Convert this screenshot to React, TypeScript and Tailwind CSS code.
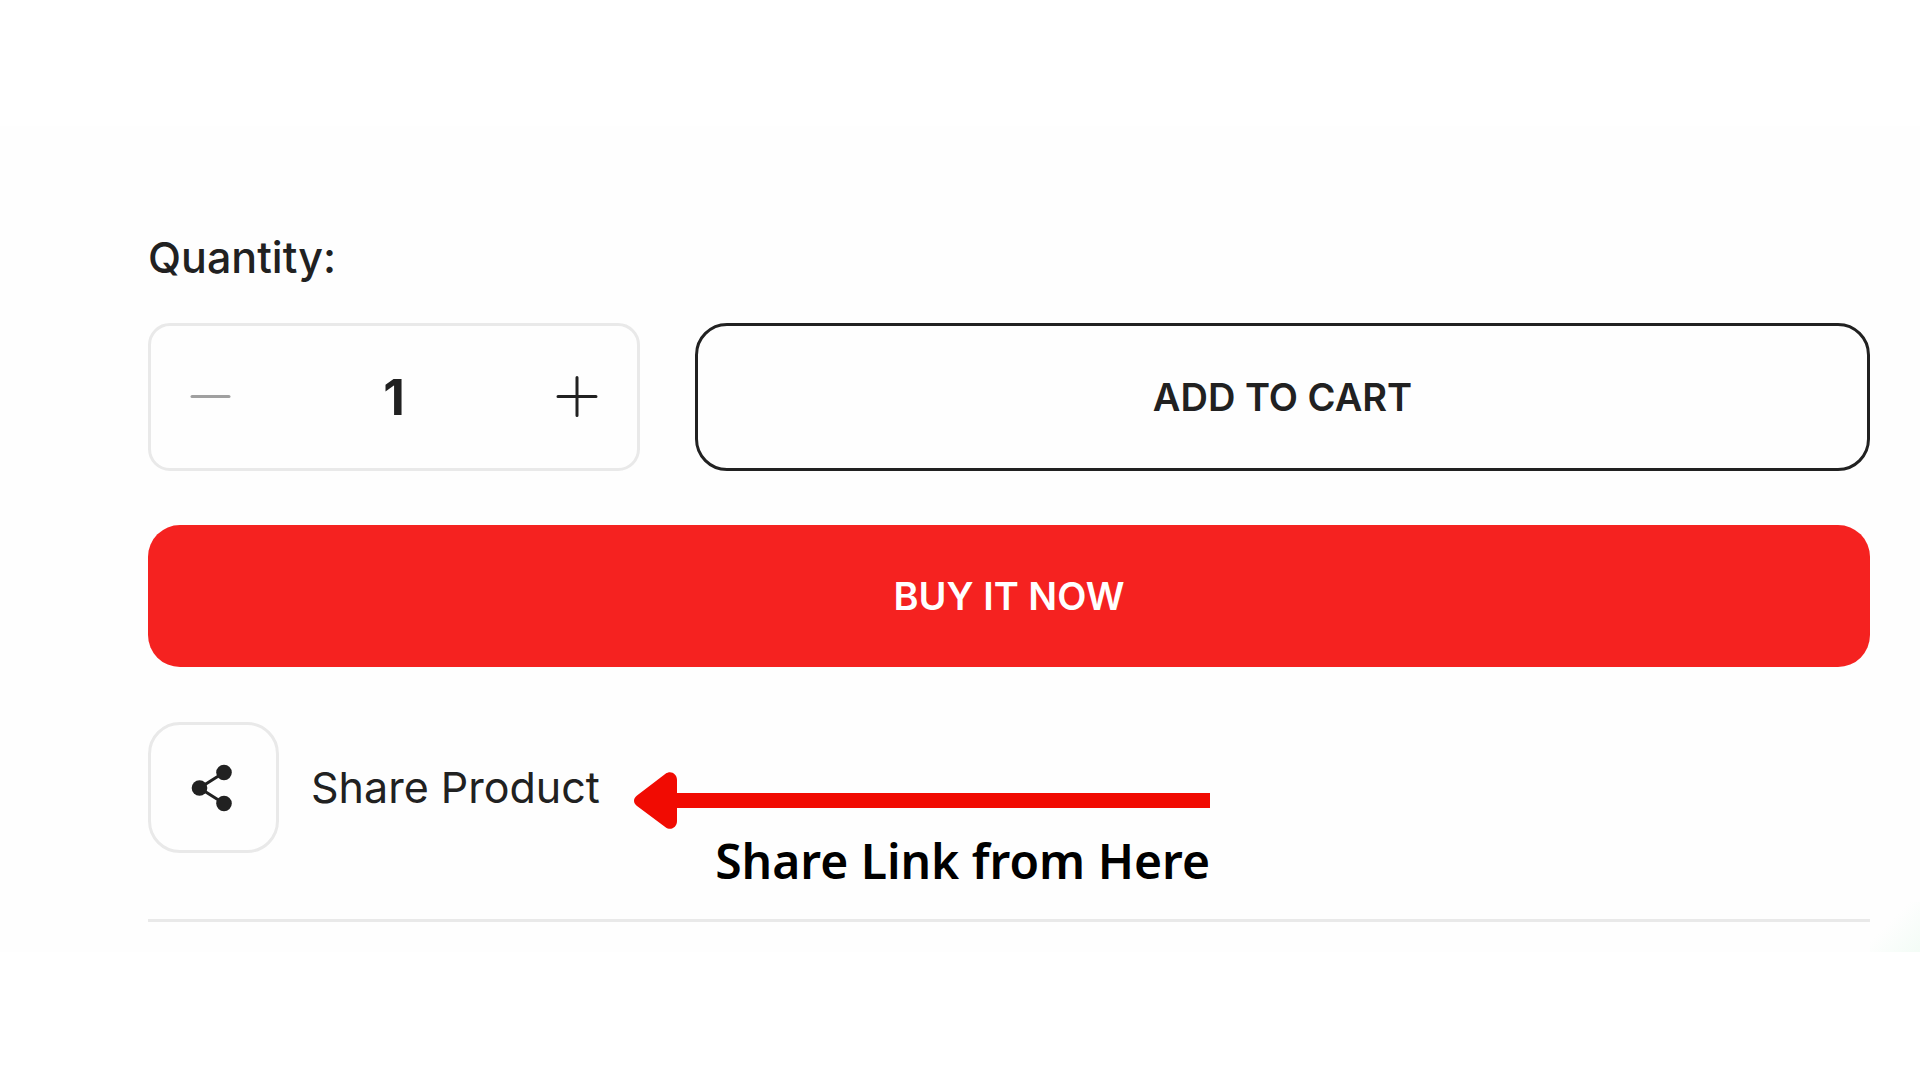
import { useState } from "react";

function QuantityPicker() {
  const [quantity, setQuantity] = useState(1);
  return (
    <div className="flex h-[148px] w-[492px] shrink-0 items-center justify-between rounded-[22px] border-[3px] border-[#e9e9e9] px-9">
      <button
        type="button"
        aria-label="Decrease quantity"
        disabled={quantity <= 1}
        onClick={() => setQuantity(quantity - 1)}
        className="p-0 text-[#212121] disabled:text-[#a0a0a0]"
      >
        <svg className="size-[48px]" viewBox="0 0 48 48" fill="none" stroke="currentColor" strokeWidth="3" strokeLinecap="round">
          <path d="M5 23.5H42" />
        </svg>
      </button>
      <input
        id="quantity"
        type="text"
        inputMode="numeric"
        value={quantity}
        onChange={(e) => setQuantity(Math.max(1, Number(e.target.value) || 1))}
        className="w-0 flex-1 bg-transparent text-center text-[50px] font-bold outline-none"
      />
      <button
        type="button"
        aria-label="Increase quantity"
        onClick={() => setQuantity(quantity + 1)}
        className="p-0"
      >
        <svg className="size-[48px]" viewBox="0 0 48 48" fill="none" stroke="currentColor" strokeWidth="3" strokeLinecap="round">
          <path d="M5 23.5H43M24 4.5V42.5" />
        </svg>
      </button>
    </div>
  );
}

function ShareIcon() {
  return (
    <svg className="size-[48px]" viewBox="0 0 48 48" fill="currentColor" stroke="currentColor">
      <path d="M34 8.5L9.5 24L34 39.5" fill="none" strokeWidth="3" />
      <circle cx="34" cy="8.5" r="7.8" stroke="none" />
      <circle cx="9.5" cy="24" r="7.8" stroke="none" />
      <circle cx="34" cy="39.5" r="7.8" stroke="none" />
    </svg>
  );
}

function ShareHint() {
  return (
    <div className="mt-[50px] flex w-[576px] flex-col items-end">
      <svg className="h-[57px] w-full" viewBox="0 0 576 57" fill="#f10b02">
        <path d="M36 21H576V36H36Z" />
        <path d="M3 23.5L31.5 1.8C36.5 -2 43 1.5 43 8V49C43 55.5 36.5 59 31.5 55.2L3 34C-1 31 -1 26.5 3 23.5Z" />
      </svg>
      <p className="font-['Noto_Sans',sans-serif] text-[48px] leading-[64px] font-semibold whitespace-nowrap text-black">
        Share Link from Here
      </p>
    </div>
  );
}

export default function App() {
  return (
    <main className="min-h-screen bg-white pt-[126px] font-['Inter',sans-serif] text-[#212121]">
      <section className="relative bg-[#fefefe] pt-[102px] pr-[50px] pb-[30px] pl-[148px]">
        <label htmlFor="quantity" className="block text-[43px] leading-[58px] font-medium">
          Quantity:
        </label>
        <div className="mt-[37px] flex gap-[55px]">
          <QuantityPicker />
          <button
            type="button"
            className="h-[148px] flex-1 rounded-[32px] border-[3px] border-[#212121] text-[38px] font-semibold"
          >
            ADD TO CART
          </button>
        </div>
        <button
          type="button"
          className="mt-[54px] h-[142px] w-full rounded-[32px] bg-[#f52220] text-[38px] font-semibold text-white"
        >
          BUY IT NOW
        </button>
        <div className="mt-[55px] flex items-start border-b-[3px] border-[#e9e9e9] pb-[26px]">
          <a href="#share" className="flex w-[486px] shrink-0 items-center gap-8 text-[43px] whitespace-nowrap">
            <span className="flex size-[131px] items-center justify-center rounded-[32px] border-[3px] border-[#e9e9e9]">
              <ShareIcon />
            </span>
            Share Product
          </a>
          <ShareHint />
        </div>
        <div className="pointer-events-none absolute right-0 bottom-0 size-[50px] bg-linear-to-br from-transparent from-40% to-[#f3fcf6]" />
      </section>
    </main>
  );
}
